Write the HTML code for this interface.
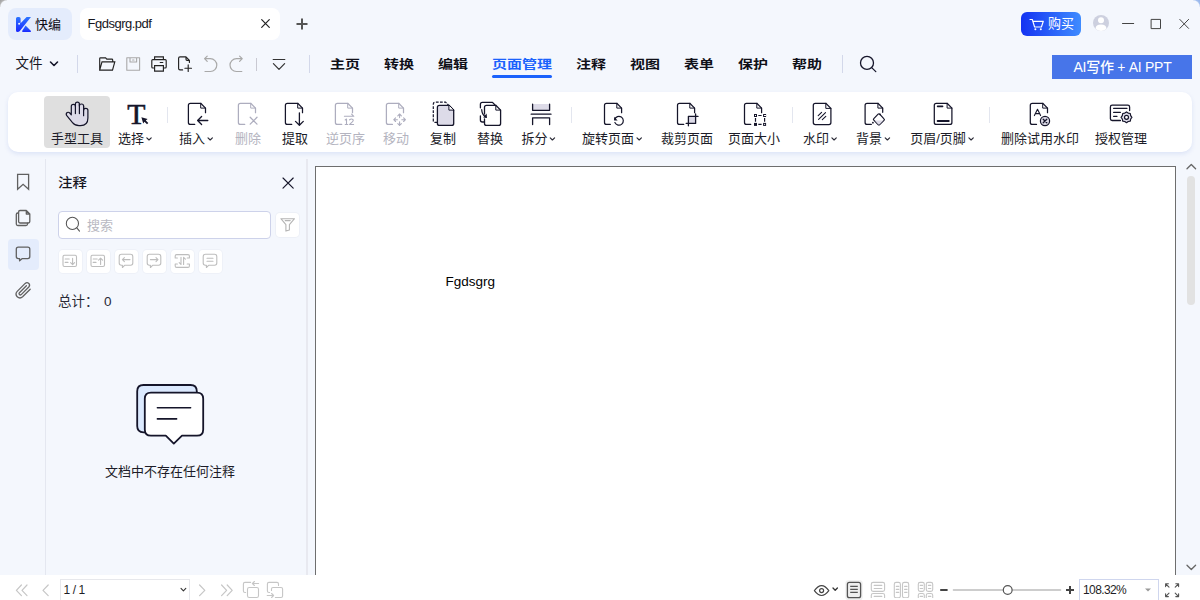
<!DOCTYPE html>
<html lang="zh-CN">
<head>
<meta charset="utf-8">
<title>快编</title>
<style>
*{box-sizing:border-box;margin:0;padding:0}
html,body{width:1200px;height:600px;overflow:hidden}
body{background:#f4f7fd;font-family:"Liberation Sans","Noto Sans CJK SC",sans-serif;color:#1c1c28;position:relative;font-size:13px}
.abs{position:absolute}
svg{position:absolute;overflow:visible}
.t{position:absolute;white-space:nowrap;line-height:1}
/* title bar */
#brand{left:8px;top:8px;width:64px;height:32px;border-radius:8px;background:#e4ecfc}
#tab{left:80px;top:8px;width:200px;height:32px;border-radius:8px;background:#fff}
#buy{left:1021px;top:12px;width:60px;height:24px;border-radius:6px;background:linear-gradient(90deg,#1433f2,#3f8cff)}
/* menu */
.m{position:absolute;top:56.8px;font-size:15px;font-weight:bold;line-height:16px;white-space:nowrap;color:#101018;transform:scaleY(.82);transform-origin:50% 50%}
.vs{position:absolute;width:1px;background:#d3d8ea}
.ts{position:absolute;width:1px;top:107px;height:16px;background:#e3e6ef}
#ai{left:1052px;top:55px;width:140px;height:24px;background:#4775e9;color:#fff;font-size:14px;font-weight:500;letter-spacing:-.28px;text-align:center;line-height:25px;padding-left:1px}
/* toolbar */
#tb{left:8px;top:92px;width:1184px;height:60px;border-radius:10px;background:#fff;box-shadow:0 2px 4px rgba(190,205,240,.45)}
#hand{left:44px;top:96px;width:66px;height:52px;border-radius:4px;background:#dfdfdf}
.l{position:absolute;top:131.5px;font-size:13px;line-height:14px;white-space:nowrap;color:#1c1c28;transform:translateX(-50%)}
.l.d{color:#b4b4c0}
.l i{font-style:normal;display:inline-block;width:8px}
/* side */
#side-act{left:8px;top:238.5px;width:30.5px;height:31px;border-radius:4px;background:#e4ecfc}
#search{left:58px;top:211px;width:213px;height:28px;border:1px solid #cdd2ea;border-radius:4px;background:#fff}
.sb{position:absolute;top:249.5px;width:23px;height:23px;border-radius:4px;background:#fff;box-shadow:0 0 0 1px #eef1f8}
#page{left:315px;top:166px;width:861px;height:420px;background:#fff;border:1px solid #6e6e6e}
#status{left:0;top:575px;width:1200px;height:25px;background:#fff}
</style>
</head>
<body>
<div class="abs" style="left:0;top:0;width:7px;height:7px;background:radial-gradient(circle at 100% 100%,#f4f7fd 6.2px,#b4b4b4 7.4px,#9c9c9c 10px)"></div>
<div class="abs" style="right:0;top:0;width:7px;height:7px;background:radial-gradient(circle at 0 100%,#f4f7fd 6.2px,#a3bfee 7.4px,#8fb0ea 10px)"></div>
<!-- TITLE BAR -->
<div class="abs" id="brand"></div>
<div class="t" style="left:35px;top:18px;font-size:13px;line-height:14px;color:#0d0d15">快编</div>
<div class="abs" id="tab"></div>
<div class="t" style="left:87.5px;top:17px;font-size:13px;letter-spacing:-.5px;line-height:14px;color:#16161e">Fgdsgrg.pdf</div>
<div class="abs" id="buy"></div>
<div class="t" style="left:1048px;top:17px;font-size:13px;line-height:14px;color:#fff">购买</div>

<!-- MENU BAR -->
<div class="t" style="left:15.5px;top:55.5px;font-size:13.5px;line-height:16px;color:#15151f">文件</div>
<div class="vs" style="left:77px;top:55px;height:18px"></div>
<div class="vs" style="left:256px;top:58px;height:13px;background:#c9c9d2"></div>
<div class="vs" style="left:309px;top:55px;height:18px"></div>
<div class="m" style="left:330px">主页</div>
<div class="m" style="left:384px">转换</div>
<div class="m" style="left:438px">编辑</div>
<div class="m" style="left:492px;color:#1b62fc">页面管理</div>
<div class="abs" style="left:492px;top:75px;width:60px;height:3px;border-radius:2px;background:#1b62fc"></div>
<div class="m" style="left:576px">注释</div>
<div class="m" style="left:630px">视图</div>
<div class="m" style="left:684px">表单</div>
<div class="m" style="left:738px">保护</div>
<div class="m" style="left:792px">帮助</div>
<div class="vs" style="left:842px;top:55px;height:18px"></div>
<div class="abs" id="ai">AI写作 + AI PPT</div>

<!-- TOOLBAR -->
<div class="abs" id="tb"></div>
<div class="abs" id="hand"></div>
<div class="l" style="left:77px">手型工具</div>
<div class="l" style="left:135px">选择<i></i></div>
<div class="l" style="left:196px">插入<i></i></div>
<div class="l d" style="left:248px">删除</div>
<div class="l" style="left:295px">提取</div>
<div class="l d" style="left:345.5px">逆页序</div>
<div class="l d" style="left:396px">移动</div>
<div class="l" style="left:443px">复制</div>
<div class="l" style="left:490px">替换</div>
<div class="l" style="left:538.5px">拆分<i></i></div>
<div class="l" style="left:612px">旋转页面<i></i></div>
<div class="l" style="left:687px">裁剪页面</div>
<div class="l" style="left:754px">页面大小</div>
<div class="l" style="left:820px">水印<i></i></div>
<div class="l" style="left:873px">背景<i></i></div>
<div class="l" style="left:942px">页眉/页脚<i></i></div>
<div class="l" style="left:1040px">删除试用水印</div>
<div class="l" style="left:1121px">授权管理</div>
<div class="ts" style="left:167px"></div>
<div class="ts" style="left:571px"></div>
<div class="ts" style="left:792px"></div>
<div class="ts" style="left:989px"></div>

<!-- SIDEBAR -->
<div class="vs" style="left:45px;top:159px;height:417px;background:#e4e7f0"></div>
<div class="abs" id="side-act"></div>
<div class="t" style="left:58px;top:175px;font-size:14.5px;font-weight:500;line-height:15px;color:#15151f;transform:scaleY(.9)">注释</div>
<div class="abs" id="search"></div>
<div class="t" style="left:87px;top:218.7px;font-size:13px;line-height:14px;color:#b9b9c2">搜索</div>
<div class="abs" style="left:275.5px;top:213px;width:23px;height:23.5px;border-radius:4px;background:#fff;box-shadow:0 0 0 1px #edf0f7"></div>
<div class="sb" style="left:58.5px"></div>
<div class="sb" style="left:86.5px"></div>
<div class="sb" style="left:114.5px"></div>
<div class="sb" style="left:142.5px"></div>
<div class="sb" style="left:170.5px"></div>
<div class="sb" style="left:198.5px"></div>
<div class="t" style="left:58px;top:295px;font-size:13.5px;line-height:14px;color:#2a2a36">总计：</div>
<div class="t" style="left:104px;top:295px;font-size:13.5px;line-height:14px;color:#2a2a36">0</div>
<div class="t" style="left:105px;top:465px;font-size:13px;line-height:14px;color:#1c1c28">文档中不存在任何注释</div>
<div class="vs" style="left:306px;top:159px;height:417px;width:2px;background:#e8e9f0"></div>

<!-- DOCUMENT -->
<div class="abs" id="page"></div>
<div class="t" style="left:445.5px;top:275px;font-size:13.5px;line-height:14px;color:#000">Fgdsgrg</div>
<div class="abs" style="left:1187px;top:176px;width:8px;height:129px;border-radius:4px;background:#e2e2e2"></div>

<!-- STATUS BAR -->
<div class="abs" id="status"></div>
<div class="abs" style="left:60px;top:579px;width:130px;height:22px;background:#fff;border:1px solid #e7e8ec"></div>
<div class="t" style="left:63.5px;top:584px;font-size:12px;letter-spacing:-.4px;line-height:13px;color:#1e1e26">1 / 1</div>
<div class="abs" style="left:1079px;top:579px;width:80px;height:22px;background:#fff;border:1px solid #cfd6ee"></div>
<div class="t" style="left:1083px;top:583.5px;font-size:12px;line-height:13px;letter-spacing:-.6px;color:#1e1e26">108.32%</div>
<svg width="1200" height="600" viewBox="0 0 1200 600" style="left:0;top:0;pointer-events:none" id="ic1">
<defs><linearGradient id="kg" x1="0" y1="0" x2="0" y2="1"><stop offset="0" stop-color="#2b74ff"/><stop offset="1" stop-color="#1a27ff"/></linearGradient></defs>
<g transform="translate(16,17)"><path d="M0,1.6 Q0,0 1.6,0 H3 Q4.6,0 4.6,1.6 V6.2 L10.6,0 H15 L3.6,14.2 Q2.8,15 1.6,15 Q0,15 0,13.4 Z" fill="url(#kg)"/><path d="M9.6,8.6 L15,14 Q15.2,15 14.2,15 H6.6 Q5.8,14.6 6.4,13.4 Z" fill="url(#kg)"/><circle cx="3.1" cy="6.8" r="1" fill="#f4f7ff"/></g>
<path d="M261.7,19.7 L269.3,27.3 M269.3,19.7 L261.7,27.3" fill="none" stroke="#222" stroke-width="1.2" stroke-linecap="round" stroke-linejoin="round" />
<path d="M296.5,24 H307.5 M302,18.5 V29.5" fill="none" stroke="#555" stroke-width="2" stroke-linejoin="round" stroke-linecap="butt"/>
<path d="M1030,19.5 H1032.3 L1034.6,27 H1041.4 L1043.3,21.3 H1033" fill="none" stroke="#fff" stroke-width="1.15" stroke-linecap="round" stroke-linejoin="round" />
<circle cx="1035.4" cy="29.3" r="1" fill="#fff"/><circle cx="1040.8" cy="29.3" r="1" fill="#fff"/>
<circle cx="1101" cy="23" r="8" fill="#cdd0df"/><circle cx="1101" cy="20.3" r="3" fill="#fff"/><path d="M1095.5,28.8 Q1095.8,24.6 1101,24.6 Q1106.2,24.6 1106.5,28.8 Q1104,31 1101,31 Q1098,31 1095.5,28.8 Z" fill="#fff"/>
<path d="M1122.5,23.5 H1133.7" fill="none" stroke="#444" stroke-width="1" stroke-linecap="round" stroke-linejoin="round" />
<path d="M1151.5,19.4 H1160.5 V28.6 H1151.5 Z" fill="none" stroke="#444" stroke-width="1" stroke-linecap="round" stroke-linejoin="round" />
<path d="M1179.8,19.4 L1188.6,28.4 M1188.6,19.4 L1179.8,28.4" fill="none" stroke="#444" stroke-width="1" stroke-linecap="round" stroke-linejoin="round" />
<path d="M50.5,62 L54,65.5 L57.5,62" fill="none" stroke="#15152a" stroke-width="1.6" stroke-linecap="round" stroke-linejoin="round" />
<path d="M99.7,70.1 V58.6 Q99.7,57.8 100.5,57.8 H105.6 L106.8,59.1 H111.8 Q112.7,59.1 112.7,60 V61.8 M99.7,70.1 L102,61.9 H114.8 L112.5,70.1 Z" fill="none" stroke="#222" stroke-width="1.15" stroke-linecap="round" stroke-linejoin="miter"/>
<path d="M126.8,57.7 H139.6 V70.2 H126.8 Z M130,57.7 V62 H136.6 V57.7 M132.6,60 H134" fill="none" stroke="#a9a9a9" stroke-width="1.1" stroke-linecap="round" stroke-linejoin="round" />
<path d="M154.6,59.6 V56.8 H163.4 V59.6 M154.6,68 H152.8 Q151.8,68 151.8,67 V60.6 Q151.8,59.6 152.8,59.6 H165.2 Q166.2,59.6 166.2,60.6 V67 Q166.2,68 165.2,68 H163.4 M154.6,65.6 H163.4 V71.1 H154.6 Z M160.2,62.5 H162.8" fill="none" stroke="#222" stroke-width="1.15" stroke-linecap="round" stroke-linejoin="miter"/>
<path d="M189.4,62.5 V60.3 L186,56.9 H180 Q178.6,56.9 178.6,58.3 V68.5 Q178.6,69.9 180,69.9 H182.6 M186,56.9 V59.3 Q186,60.3 187,60.3 H189.4 M184.9,68.2 H191.5 M188.2,64.9 V71.5" fill="none" stroke="#222" stroke-width="1.15" stroke-linecap="round" stroke-linejoin="round" />
<path d="M205,71.5 H210.4 A6.4,6.4 0 0 0 210.4,58.7 H204.6 M207.2,56.1 L204.6,58.7 L207.2,61.3" fill="none" stroke="#a9a9a9" stroke-width="1.2" stroke-linecap="round" stroke-linejoin="round" />
<path d="M241.8,71.5 H236.4 A6.4,6.4 0 0 1 236.4,58.7 H242.2 M239.6,56.1 L242.2,58.7 L239.6,61.3" fill="none" stroke="#a9a9a9" stroke-width="1.2" stroke-linecap="round" stroke-linejoin="round" />
<path d="M273.2,59.5 H284.8 M273.4,63.6 L279,69.4 L284.6,63.6" fill="none" stroke="#333" stroke-width="1.2" stroke-linecap="round" stroke-linejoin="round" />
<circle cx="867" cy="62.9" r="6.5" fill="none" stroke="#15152a" stroke-width="1.3"/>
<path d="M871.7,67.6 L875.8,71.6" fill="none" stroke="#15152a" stroke-width="1.3" stroke-linecap="round" stroke-linejoin="round" />
<path d="M71.3,114.8 V106.3 Q71.3,104.3 73.35,104.3 Q75.4,104.3 75.4,106.3 V104.1 Q75.4,102.1 77.4,102.1 Q79.4,102.1 79.4,104.1 V106 Q79.4,104 81.5,104 Q83.6,104 83.6,106 V110.3 Q83.6,108.3 85.75,108.3 Q87.9,108.3 87.9,110.3 V118 Q87.9,125.6 80.5,125.6 H79 Q75,125.6 72.5,122.6 L66.6,115.4 Q65.6,113.6 67.2,112.5 Q68.6,111.8 69.8,113 Z" fill="#dddbe8" stroke="#15152a" stroke-width="1.2" stroke-linecap="round" stroke-linejoin="round" />
<path d="M75.4,106.3 V113.6 M79.4,104.1 V113.6 M83.6,106 V115.7" fill="none" stroke="#15152a" stroke-width="1.2" stroke-linecap="round" stroke-linejoin="round" />
<text x="136.45" y="123.8" font-family="Liberation Serif, serif" font-size="29.8" text-anchor="middle" fill="#15152a" stroke="#15152a" stroke-width="0.55">T</text>
<path d="M141.4,117.2 L147.6,119 L145.8,120.4 L148.3,122.9 L147,124.2 L144.5,121.7 L143.2,123.4 Z" fill="#15152a" stroke="#fff" stroke-width="1.2" paint-order="stroke"/>
<path d="M205.5,112.7 V108.1 L200.7,103.3 H190.4 Q188.4,103.3 188.4,105.3 V122.4 Q188.4,124.4 190.4,124.4 H194.70000000000002" fill="none" stroke="#15152a" stroke-width="1.25" stroke-linecap="round" stroke-linejoin="round" />
<path d="M200.7,103.3 V108.1 H205.5" fill="none" stroke="#15152a" stroke-width="1.0" stroke-linecap="round" stroke-linejoin="round" />
<path d="M197.6,120.5 H207.8 M201.6,116.5 L197.6,120.5 L201.6,124.5" fill="none" stroke="#15152a" stroke-width="1.3" stroke-linecap="round" stroke-linejoin="round" />
<path d="M255.5,112.7 V108.1 L250.7,103.3 H240.4 Q238.4,103.3 238.4,105.3 V122.4 Q238.4,124.4 240.4,124.4 H244.70000000000002" fill="none" stroke="#adadbe" stroke-width="1.25" stroke-linecap="round" stroke-linejoin="round" />
<path d="M250.7,103.3 V108.1 H255.5" fill="none" stroke="#adadbe" stroke-width="1.0" stroke-linecap="round" stroke-linejoin="round" />
<path d="M250.2,117.3 L257,124.1 M257,117.3 L250.2,124.1" fill="none" stroke="#adadbe" stroke-width="1.3" stroke-linecap="round" stroke-linejoin="round" />
<path d="M302.5,112.7 V108.1 L297.7,103.3 H287.4 Q285.4,103.3 285.4,105.3 V122.4 Q285.4,124.4 287.4,124.4 H291.7" fill="none" stroke="#15152a" stroke-width="1.25" stroke-linecap="round" stroke-linejoin="round" />
<path d="M297.7,103.3 V108.1 H302.5" fill="none" stroke="#15152a" stroke-width="1.0" stroke-linecap="round" stroke-linejoin="round" />
<path d="M299.4,112.8 V125.2 M295.5,121.4 L299.4,125.2 L303.3,121.4" fill="none" stroke="#15152a" stroke-width="1.3" stroke-linecap="round" stroke-linejoin="round" />
<path d="M352.5,112.7 V108.1 L347.7,103.3 H337.4 Q335.4,103.3 335.4,105.3 V122.4 Q335.4,124.4 337.4,124.4 H341.7" fill="none" stroke="#adadbe" stroke-width="1.25" stroke-linecap="round" stroke-linejoin="round" />
<path d="M347.7,103.3 V108.1 H352.5" fill="none" stroke="#adadbe" stroke-width="1.0" stroke-linecap="round" stroke-linejoin="round" />
<path d="M344.4,116.3 H353.8 L351.6,114.1" fill="none" stroke="#adadbe" stroke-width="1.1" stroke-linecap="round" stroke-linejoin="round" />
<path d="M345.2,120 L346.5,119 V124.5 M345.2,124.5 H347.8 M349.6,119.8 Q351.5,118.3 353.2,119.8 Q353.8,121 349.6,124.5 H353.6" fill="none" stroke="#adadbe" stroke-width="1.1" stroke-linecap="round" stroke-linejoin="round" />
<path d="M403.5,112.7 V108.1 L398.7,103.3 H388.4 Q386.4,103.3 386.4,105.3 V122.4 Q386.4,124.4 388.4,124.4 H392.4" fill="none" stroke="#adadbe" stroke-width="1.25" stroke-linecap="round" stroke-linejoin="round" />
<path d="M398.7,103.3 V108.1 H403.5" fill="none" stroke="#adadbe" stroke-width="1.0" stroke-linecap="round" stroke-linejoin="round" />
<path d="M399.6,114 V117.6 M399.6,121.8 V125.4 M393.8,119.7 H397.4 M401.8,119.7 H405.4 M397.8,115.8 L399.6,114 L401.4,115.8 M397.8,123.6 L399.6,125.4 L401.4,123.6 M395.6,117.9 L393.8,119.7 L395.6,121.5 M403.6,117.9 L405.4,119.7 L403.6,121.5" fill="none" stroke="#adadbe" stroke-width="1.1" stroke-linecap="round" stroke-linejoin="round" />
<path d="M437.4,122.4 H435.2 Q433.3,122.4 433.3,120.4 V104.1 Q433.3,102.2 435.2,102.2 H445.6 L448.4,105" fill="none" stroke="#15152a" stroke-width="1.2" stroke-linejoin="round" stroke-dasharray="2.8 1.3" stroke-linecap="butt"/>
<path d="M448.9,105.3 H439.4 Q437.4,105.3 437.4,107.3 V123.4 Q437.4,125.4 439.4,125.4 H451.7 Q453.7,125.4 453.7,123.4 V110.1 Z" fill="#dddbe8" stroke="#15152a" stroke-width="1.3" stroke-linecap="round" stroke-linejoin="round" />
<path d="M448.9,105.3 V110.1 H453.7 Z" fill="#fff" stroke="#15152a" stroke-width="1.0" stroke-linecap="round" stroke-linejoin="round" />
<path d="M484.5,122 H482.4 Q480.4,122 480.4,120 V116 M480.4,107.8 V104.3 Q480.4,102.4 482.4,102.4 H492.5 L495,105" fill="none" stroke="#15152a" stroke-width="1.3" stroke-linecap="round" stroke-linejoin="round" />
<path d="M484.5,114.1 V107.3 Q484.5,105.3 486.5,105.3 H495.8 L500.6,110.1 V123.4 Q500.6,125.4 498.6,125.4 H486.5 Q484.5,125.4 484.5,123.4 V119 " fill="none" stroke="#15152a" stroke-width="1.3" stroke-linecap="round" stroke-linejoin="round" />
<path d="M495.8,105.3 V110.1 H500.6" fill="none" stroke="#15152a" stroke-width="1.0" stroke-linecap="round" stroke-linejoin="round" />
<path d="M481.7,109.6 Q482,114.8 485.4,116.6" fill="none" stroke="#15152a" stroke-width="1.2" stroke-linecap="round" stroke-linejoin="round" />
<path d="M486.6,113.6 L487,118 L483.2,117.4 Z" fill="#15152a"/>
<rect x="532.6" y="104" width="17" height="6.3" fill="#dddbe8"/>
<path d="M532.6,104.2 V110.3 H549.6 V104.2 M531.2,114.2 H551 M532.6,124.5 V117.8 H549.6 V124.5" fill="none" stroke="#15152a" stroke-width="1.3" stroke-linecap="round" stroke-linejoin="round" />
<path d="M621.6,112.7 V108.1 L616.8000000000001,103.3 H606.5 Q604.5,103.3 604.5,105.3 V122.4 Q604.5,124.4 606.5,124.4 H610.3" fill="none" stroke="#15152a" stroke-width="1.25" stroke-linecap="round" stroke-linejoin="round" />
<path d="M616.8000000000001,103.3 V108.1 H621.6" fill="none" stroke="#15152a" stroke-width="1.0" stroke-linecap="round" stroke-linejoin="round" />
<path d="M614.7,119.5 A4.4,4.4 0 1 1 614.9,122.6" fill="none" stroke="#15152a" stroke-width="1.2" stroke-linecap="round" stroke-linejoin="round" />
<path d="M614.1,116.8 V120.4 H617.6 Z" fill="#15152a"/>
<path d="M694.6,112.7 V108.1 L689.8000000000001,103.3 H679.5 Q677.5,103.3 677.5,105.3 V122.4 Q677.5,124.4 679.5,124.4 H683.7" fill="none" stroke="#15152a" stroke-width="1.25" stroke-linecap="round" stroke-linejoin="round" />
<path d="M689.8000000000001,103.3 V108.1 H694.6" fill="none" stroke="#15152a" stroke-width="1.0" stroke-linecap="round" stroke-linejoin="round" />
<rect x="688.4" y="116.4" width="7.2" height="7" fill="#dddbe8"/>
<path d="M688.4,116.4 V125.8 M686.2,123.4 H695.6 V114 M688.4,116.4 H698" fill="none" stroke="#15152a" stroke-width="1.3" stroke-linecap="round" stroke-linejoin="round" />
<path d="M761.6,112.7 V108.1 L756.8000000000001,103.3 H746.5 Q744.5,103.3 744.5,105.3 V122.4 Q744.5,124.4 746.5,124.4 H750.7" fill="none" stroke="#15152a" stroke-width="1.25" stroke-linecap="round" stroke-linejoin="round" />
<path d="M756.8000000000001,103.3 V108.1 H761.6" fill="none" stroke="#15152a" stroke-width="1.0" stroke-linecap="round" stroke-linejoin="round" />
<path d="M758.3,115.5 H761.6 M758.3,124.4 H761.6 M755.5,118.1 V121.7 M764.6,118.1 V121.7" fill="none" stroke="#15152a" stroke-width="1.2" stroke-linejoin="round" stroke-linecap="butt"/>
<rect x="754.5" y="114.5" width="2" height="2" fill="#fff" stroke="#15152a" stroke-width="1"/>
<rect x="754.5" y="123.4" width="2" height="2" fill="#fff" stroke="#15152a" stroke-width="1"/>
<rect x="763.6" y="114.5" width="2" height="2" fill="#fff" stroke="#15152a" stroke-width="1"/>
<rect x="763.6" y="123.4" width="2" height="2" fill="#fff" stroke="#15152a" stroke-width="1"/>
<path d="M825.8,103.3 H815.3 Q813.3,103.3 813.3,105.3 V122.5 Q813.3,124.5 815.3,124.5 H828.9 Q830.9,124.5 830.9,122.5 V108.39999999999999 Z" fill="none" stroke="#15152a" stroke-width="1.25" stroke-linecap="round" stroke-linejoin="round" />
<path d="M825.8,103.3 V108.39999999999999 H830.9" fill="none" stroke="#15152a" stroke-width="1.0" stroke-linecap="round" stroke-linejoin="round" />
<path d="M818.2,115.6 L821.6,112.3 M818.6,119.4 L825.5,112.7 M822.3,119.7 L825.8,116.4" fill="none" stroke="#15152a" stroke-width="1.1" stroke-linecap="round" stroke-linejoin="round" />
<path d="M882.7,112.3 V108.1 L877.9000000000001,103.3 H867.1 Q865.1,103.3 865.1,105.3 V122.4 Q865.1,124.4 867.1,124.4 H871.3000000000001" fill="none" stroke="#15152a" stroke-width="1.25" stroke-linecap="round" stroke-linejoin="round" />
<path d="M877.9000000000001,103.3 V108.1 H882.7" fill="none" stroke="#15152a" stroke-width="1.0" stroke-linecap="round" stroke-linejoin="round" />
<path d="M878.1,114.2 Q878.9,113.4 879.7,114.2 L884,118.8 Q884.8,119.6 884,120.4 L879.7,124.5 Q878.9,125.3 878.1,124.5 L873.8,120.2 Q873,119.4 873.8,118.6 Z" fill="#fff" stroke="#15152a" stroke-width="1.2" stroke-linecap="round" stroke-linejoin="round" />
<path d="M874.8,120.6 H883.2 L879.7,124.2 Q878.9,125 878.1,124.2 Z" fill="#dddbe8" stroke="none" stroke-width="0" stroke-linecap="round" stroke-linejoin="round" />
<circle cx="872.9" cy="122.7" r="0.9" fill="#15152a"/><circle cx="880" cy="114.3" r="0.9" fill="#15152a"/>
<path d="M947.1,103.3 H936.3 Q934.3,103.3 934.3,105.3 V122.4 Q934.3,124.4 936.3,124.4 H949.9 Q951.9,124.4 951.9,122.4 V108.1 Z" fill="none" stroke="#15152a" stroke-width="1.25" stroke-linecap="round" stroke-linejoin="round" />
<path d="M947.1,103.3 V108.1 H951.9" fill="none" stroke="#15152a" stroke-width="1.0" stroke-linecap="round" stroke-linejoin="round" />
<path d="M937.6,106.4 H942.6" fill="none" stroke="#15152a" stroke-width="1.6" stroke-linecap="round" stroke-linejoin="round" />
<path d="M937.6,121 H948.8" fill="none" stroke="#15152a" stroke-width="1.8" stroke-linecap="round" stroke-linejoin="round" />
<path d="M1047.5,112.7 V108.1 L1042.7,103.3 H1032.3 Q1030.3,103.3 1030.3,105.3 V122.4 Q1030.3,124.4 1032.3,124.4 H1036.5" fill="none" stroke="#15152a" stroke-width="1.25" stroke-linecap="round" stroke-linejoin="round" />
<path d="M1042.7,103.3 V108.1 H1047.5" fill="none" stroke="#15152a" stroke-width="1.0" stroke-linecap="round" stroke-linejoin="round" />
<path d="M1034.4,115.6 L1037.5,109.2 L1040.6,115.6 M1035.4,113.6 H1039.6" fill="none" stroke="#15152a" stroke-width="1.1" stroke-linecap="round" stroke-linejoin="round" />
<circle cx="1045" cy="121" r="4.6" fill="#dddbe8" stroke="#15152a" stroke-width="1.2"/>
<path d="M1043.2,119.2 L1046.8,122.8 M1046.8,119.2 L1043.2,122.8" fill="none" stroke="#15152a" stroke-width="1.3" stroke-linecap="round" stroke-linejoin="round" />
<path d="M1129.6,110.5 V107 Q1129.6,105.2 1127.8,105.2 H1112.2 Q1110.4,105.2 1110.4,107 V118.7 Q1110.4,120.5 1112.2,120.5 H1120.4 M1113.6,108.3 H1127 M1113.6,112.3 H1120.4 M1113.6,116.3 H1117" fill="none" stroke="#15152a" stroke-width="1.3" stroke-linecap="round" stroke-linejoin="round" />
<path d="M1126.5,111.9 L1128.2,113.1 L1130.3,113.5 L1130.7,115.6 L1131.9,117.3 L1130.7,119.0 L1130.3,121.1 L1128.2,121.5 L1126.5,122.7 L1124.8,121.5 L1122.7,121.1 L1122.3,119.0 L1121.1,117.3 L1122.3,115.6 L1122.7,113.5 L1124.8,113.1 Z" fill="#dddbe8" stroke="#15152a" stroke-width="1.2" stroke-linecap="round" stroke-linejoin="round" />
<circle cx="1126.5" cy="117.3" r="2" fill="#fff" stroke="#15152a" stroke-width="1.2"/>
<path d="M146.8,137.8 L149.0,140.0 L151.20000000000002,137.8" fill="none" stroke="#2a2a36" stroke-width="1.15" stroke-linecap="round" stroke-linejoin="round" />
<path d="M208,137.8 L210.2,140.0 L212.4,137.8" fill="none" stroke="#2a2a36" stroke-width="1.15" stroke-linecap="round" stroke-linejoin="round" />
<path d="M550.2,137.8 L552.4000000000001,140.0 L554.6,137.8" fill="none" stroke="#2a2a36" stroke-width="1.15" stroke-linecap="round" stroke-linejoin="round" />
<path d="M637,137.8 L639.2,140.0 L641.4,137.8" fill="none" stroke="#2a2a36" stroke-width="1.15" stroke-linecap="round" stroke-linejoin="round" />
<path d="M831.9,137.8 L834.1,140.0 L836.3,137.8" fill="none" stroke="#2a2a36" stroke-width="1.15" stroke-linecap="round" stroke-linejoin="round" />
<path d="M885.2,137.8 L887.4000000000001,140.0 L889.6,137.8" fill="none" stroke="#2a2a36" stroke-width="1.15" stroke-linecap="round" stroke-linejoin="round" />
<path d="M968.9,137.8 L971.1,140.0 L973.3,137.8" fill="none" stroke="#2a2a36" stroke-width="1.15" stroke-linecap="round" stroke-linejoin="round" />
</svg>
<svg width="1200" height="600" viewBox="0 0 1200 600" style="left:0;top:0;pointer-events:none" id="ic2">
<path d="M17.6,174.4 H28.6 V189.3 L23.1,184.3 L17.6,189.3 Z" fill="none" stroke="#606060" stroke-width="1.3" stroke-linecap="round" stroke-linejoin="miter"/>
<path d="M18.5,213 H17.8 Q16.3,213 16.3,214.5 V224 Q16.3,225.5 17.8,225.5 H26 Q27.5,225.5 27.5,224 V223.2" fill="none" stroke="#606060" stroke-width="1.3" stroke-linecap="round" stroke-linejoin="round" />
<path d="M26.3,210.5 H20 Q18.6,210.5 18.6,212 V221.6 Q18.6,223 20,223 H28.4 Q29.8,223 29.8,221.6 V214 Z M26.3,210.5 V214 H29.8" fill="none" stroke="#606060" stroke-width="1.3" stroke-linecap="round" stroke-linejoin="round" />
<path d="M18.3,247.2 H27.8 Q29.8,247.2 29.8,249.2 V256.6 Q29.8,258.6 27.8,258.6 H22.3 L19.6,260.8 V258.6 H18.3 Q16.3,258.6 16.3,256.6 V249.2 Q16.3,247.2 18.3,247.2 Z" fill="none" stroke="#606060" stroke-width="1.3" stroke-linecap="round" stroke-linejoin="round" />
<path d="M30.2,289.2 L22.6,296.8 Q20,299.2 17.2,296.8 Q14.8,294 17.2,291.4 L25.2,283.4 Q27,281.8 28.8,283.4 Q30.4,285.2 28.8,287 L21.2,294.6 Q20.2,295.4 19.4,294.6 Q18.6,293.6 19.4,292.8 L26.4,285.8" fill="none" stroke="#606060" stroke-width="1.3" stroke-linecap="round" stroke-linejoin="round" />
<path d="M283,178 L293.2,188.2 M293.2,178 L283,188.2" fill="none" stroke="#15152a" stroke-width="1.15" stroke-linecap="round" stroke-linejoin="round" />
<circle cx="72.4" cy="223.4" r="6.1" fill="none" stroke="#555" stroke-width="1.05"/>
<path d="M76.8,227.9 L79.5,231.2" fill="none" stroke="#555" stroke-width="1.05" stroke-linecap="round" stroke-linejoin="round" />
<path d="M280.9,218.7 H294.5 L289.4,224.7 V229.9 L285.9,231.1 V224.7 Z M285.2,220.6 H290.2" fill="none" stroke="#b4b4b4" stroke-width="1.1" stroke-linecap="round" stroke-linejoin="round" />
<path d="M64.5,255.3 H75.0 Q76.5,255.3 76.5,256.8 V265.0 Q76.5,266.5 75.0,266.5 H64.5 Q63,266.5 63,265.0 V256.8 Q63,255.3 64.5,255.3 Z" fill="none" stroke="#bdbdbd" stroke-width="1.1" stroke-linecap="round" stroke-linejoin="round" />
<path d="M65.2,259 H69.2 M65.2,262.4 H68 M72.6,258.4 V264.4 M70.6,262.6 L72.6,264.6 L74.6,262.6" fill="none" stroke="#bdbdbd" stroke-width="1.1" stroke-linecap="round" stroke-linejoin="round" />
<path d="M92.5,255.3 H103.0 Q104.5,255.3 104.5,256.8 V265.0 Q104.5,266.5 103.0,266.5 H92.5 Q91,266.5 91,265.0 V256.8 Q91,255.3 92.5,255.3 Z" fill="none" stroke="#bdbdbd" stroke-width="1.1" stroke-linecap="round" stroke-linejoin="round" />
<path d="M93.2,259 H97.2 M93.2,262.4 H96 M100.6,258.4 V264.4 M98.6,260.2 L100.6,258.2 L102.6,260.2" fill="none" stroke="#bdbdbd" stroke-width="1.1" stroke-linecap="round" stroke-linejoin="round" />
<path d="M121.4,254.3 H130.60000000000002 Q132.8,254.3 132.8,256.5 V263.1 Q132.8,265.3 130.60000000000002,265.3 H124.60000000000001 L122.4,267.5 V265.3 H121.4 Q119.2,265.3 119.2,263.1 V256.5 Q119.2,254.3 121.4,254.3 Z" fill="none" stroke="#bdbdbd" stroke-width="1.1" stroke-linecap="round" stroke-linejoin="round" />
<path d="M122.4,259.6 H130 M124.4,257.6 L122.4,259.6 L124.4,261.6" fill="none" stroke="#bdbdbd" stroke-width="1.1" stroke-linecap="round" stroke-linejoin="round" />
<path d="M149.39999999999998,254.3 H158.6 Q160.79999999999998,254.3 160.79999999999998,256.5 V263.1 Q160.79999999999998,265.3 158.6,265.3 H152.6 L150.39999999999998,267.5 V265.3 H149.39999999999998 Q147.2,265.3 147.2,263.1 V256.5 Q147.2,254.3 149.39999999999998,254.3 Z" fill="none" stroke="#bdbdbd" stroke-width="1.1" stroke-linecap="round" stroke-linejoin="round" />
<path d="M150.4,259.6 H158 M156,257.6 L158,259.6 L156,261.6" fill="none" stroke="#bdbdbd" stroke-width="1.1" stroke-linecap="round" stroke-linejoin="round" />
<path d="M175.2,258 V256 Q175.2,254.6 176.6,254.6 H188 Q189.4,254.6 189.4,256 V258 M175.2,264 V266 Q175.2,267.4 176.6,267.4 H188 Q189.4,267.4 189.4,266 V264 M175.2,258 H177.4 M175.2,264 H177.4 M187.2,258 H189.4 M187.2,264 H189.4 M181,257.4 V264.4 M183.6,257.4 V264.4 M179.2,262.6 L181,264.4 M185.4,259.2 L183.6,257.4" fill="none" stroke="#bdbdbd" stroke-width="1.1" stroke-linecap="round" stroke-linejoin="round" />
<path d="M205.39999999999998,254.3 H214.6 Q216.79999999999998,254.3 216.79999999999998,256.5 V263.1 Q216.79999999999998,265.3 214.6,265.3 H208.6 L206.39999999999998,267.5 V265.3 H205.39999999999998 Q203.2,265.3 203.2,263.1 V256.5 Q203.2,254.3 205.39999999999998,254.3 Z" fill="none" stroke="#bdbdbd" stroke-width="1.1" stroke-linecap="round" stroke-linejoin="round" />
<path d="M207,258.2 H213 M207,261.2 H213" fill="none" stroke="#bdbdbd" stroke-width="1.1" stroke-linecap="round" stroke-linejoin="round" />
<path d="M143.5,385 H190.5 Q196.8,385 196.8,391.3 V426 Q196.8,432.3 190.5,432.3 H143.5 Q137.2,432.3 137.2,426 V391.3 Q137.2,385 143.5,385 Z" fill="#dbe9fe" stroke="#15152a" stroke-width="1.8" stroke-linecap="round" stroke-linejoin="round" />
<path d="M151,392.6 H197 Q203.2,392.6 203.2,398.8 V429.5 Q203.2,435.7 197,435.7 H182 L173.8,443.6 L165.8,435.7 H151 Q144.8,435.7 144.8,429.5 V398.8 Q144.8,392.6 151,392.6 Z" fill="#fff" stroke="#15152a" stroke-width="1.8" stroke-linecap="round" stroke-linejoin="round" />
<path d="M157.4,407.8 H190.6 M157.4,418.9 H176.6" fill="none" stroke="#15152a" stroke-width="1.6" stroke-linecap="round" stroke-linejoin="round" />
<path d="M1187,168.8 L1191.3,164.5 L1195.6,168.8" fill="none" stroke="#666" stroke-width="1.3" stroke-linecap="round" stroke-linejoin="round" />
<path d="M1187,565.2 L1191.3,569.5 L1195.6,565.2" fill="none" stroke="#666" stroke-width="1.3" stroke-linecap="round" stroke-linejoin="round" />
</svg>
<svg width="1200" height="600" viewBox="0 0 1200 600" style="left:0;top:0;pointer-events:none" id="ic3">
<path d="M21.4,585 L16.4,590.3 L21.4,595.6 M27,585 L22,590.3 L27,595.6" fill="none" stroke="#c6c6c6" stroke-width="1.2" stroke-linecap="round" stroke-linejoin="round" />
<path d="M48.2,585 L43,590.3 L48.2,595.6" fill="none" stroke="#c6c6c6" stroke-width="1.2" stroke-linecap="round" stroke-linejoin="round" />
<path d="M181,588.4 L183.4,590.8 L185.8,588.4" fill="none" stroke="#333" stroke-width="1.1" stroke-linecap="round" stroke-linejoin="round" />
<path d="M199.6,585 L204.8,590.3 L199.6,595.6" fill="none" stroke="#c6c6c6" stroke-width="1.2" stroke-linecap="round" stroke-linejoin="round" />
<path d="M221.6,585 L226.6,590.3 L221.6,595.6 M227.2,585 L232.2,590.3 L227.2,595.6" fill="none" stroke="#c6c6c6" stroke-width="1.2" stroke-linecap="round" stroke-linejoin="round" />
<path d="M250.6,582.4 H245 Q243.4,582.4 243.4,584 V591 Q243.4,592.5 245,592.5 H245.6" fill="none" stroke="#c6c6c6" stroke-width="1.1" stroke-linecap="round" stroke-linejoin="round" />
<path d="M249.3,587.5 H256.7 Q258.5,587.5 258.5,589.3 V595.7 Q258.5,597.5 256.7,597.5 H249.3 Q247.5,597.5 247.5,595.7 V589.3 Q247.5,587.5 249.3,587.5 Z" fill="none" stroke="#c6c6c6" stroke-width="1.1" stroke-linecap="round" stroke-linejoin="round" />
<path d="M258.6,583.5 H252.4 M254.4,581.5 L252.4,583.5 L254.4,585.5" fill="none" stroke="#c6c6c6" stroke-width="1.1" stroke-linecap="round" stroke-linejoin="round" />
<path d="M278.5,585.4 V584 Q278.5,582.4 277,582.4 H269 Q267.4,582.4 267.4,584 V591 Q267.4,592.5 269,592.5 H269.6" fill="none" stroke="#c6c6c6" stroke-width="1.1" stroke-linecap="round" stroke-linejoin="round" />
<path d="M271.5,590.4 V589 Q271.5,587.5 273,587.5 H281 Q282.6,587.5 282.6,589 V596 Q282.6,597.5 281,597.5 H275.4" fill="none" stroke="#c6c6c6" stroke-width="1.1" stroke-linecap="round" stroke-linejoin="round" />
<path d="M267.2,595.5 H273.6 M271.6,593.5 L273.6,595.5 L271.6,597.5" fill="none" stroke="#c6c6c6" stroke-width="1.1" stroke-linecap="round" stroke-linejoin="round" />
<path d="M814.4,590.6 Q821.6,580.6 828.8,590.6 Q821.6,600.4 814.4,590.6 Z" fill="none" stroke="#444" stroke-width="1.2" stroke-linecap="round" stroke-linejoin="round" />
<circle cx="821.6" cy="590.6" r="2" fill="none" stroke="#444" stroke-width="1.2"/>
<path d="M833,588 L835.2,590.2 L837.4,588" fill="none" stroke="#333" stroke-width="1.3" stroke-linecap="round" stroke-linejoin="round" />
<rect x="845.4" y="580.2" width="17.3" height="20" rx="3" fill="#efefef"/>
<path d="M849.4,582.4 H858.6 Q860.6,582.4 860.6,584.4 V595.6999999999999 Q860.6,597.6999999999999 858.6,597.6999999999999 H849.4 Q847.4,597.6999999999999 847.4,595.6999999999999 V584.4 Q847.4,582.4 849.4,582.4 Z" fill="none" stroke="#555" stroke-width="1.3" stroke-linecap="round" stroke-linejoin="round" />
<path d="M850.2,586.4 H857.8 M850.2,589.4 H857.8 M850.2,592.4 H857.8" fill="none" stroke="#555" stroke-width="1.2" stroke-linejoin="round" stroke-linecap="butt"/>
<clipPath id="cb"><rect x="860" y="575" width="100" height="22.9"/></clipPath><g clip-path="url(#cb)">
<path d="M873.0999999999999,582.4 H882.8 Q884.5999999999999,582.4 884.5999999999999,584.1999999999999 V589.6 Q884.5999999999999,591.4 882.8,591.4 H873.0999999999999 Q871.3,591.4 871.3,589.6 V584.1999999999999 Q871.3,582.4 873.0999999999999,582.4 Z" fill="none" stroke="#c6c6c6" stroke-width="1.1" stroke-linecap="round" stroke-linejoin="round" />
<path d="M874.2,585.4 H881.8 M874.2,588.5 H881.8" fill="none" stroke="#c6c6c6" stroke-width="1.1" stroke-linecap="round" stroke-linejoin="round" />
<path d="M873.0999999999999,593.5 H882.8 Q884.5999999999999,593.5 884.5999999999999,595.3 V600.7 Q884.5999999999999,602.5 882.8,602.5 H873.0999999999999 Q871.3,602.5 871.3,600.7 V595.3 Q871.3,593.5 873.0999999999999,593.5 Z" fill="none" stroke="#c6c6c6" stroke-width="1.1" stroke-linecap="round" stroke-linejoin="round" />
<path d="M874.2,596.4 H881.8" fill="none" stroke="#c6c6c6" stroke-width="1.1" stroke-linecap="round" stroke-linejoin="round" />
<path d="M896.0999999999999,582.4 H898.6 Q900.4,582.4 900.4,584.1999999999999 V595.9 Q900.4,597.6999999999999 898.6,597.6999999999999 H896.0999999999999 Q894.3,597.6999999999999 894.3,595.9 V584.1999999999999 Q894.3,582.4 896.0999999999999,582.4 Z" fill="none" stroke="#c6c6c6" stroke-width="1.1" stroke-linecap="round" stroke-linejoin="round" />
<path d="M904.3,582.4 H906.9000000000001 Q908.7,582.4 908.7,584.1999999999999 V595.9 Q908.7,597.6999999999999 906.9000000000001,597.6999999999999 H904.3 Q902.5,597.6999999999999 902.5,595.9 V584.1999999999999 Q902.5,582.4 904.3,582.4 Z" fill="none" stroke="#c6c6c6" stroke-width="1.1" stroke-linecap="round" stroke-linejoin="round" />
<path d="M896.3,586.4 H898.8 M896.3,589.4 H898.8 M896.3,592.4 H898.8 M904.6,586.4 H907 M904.6,589.4 H907 M904.6,592.4 H907" fill="none" stroke="#c6c6c6" stroke-width="1.1" stroke-linecap="round" stroke-linejoin="round" />
<path d="M920.0999999999999,582.4 H922.5 Q924.3,582.4 924.3,584.1999999999999 V589.6 Q924.3,591.4 922.5,591.4 H920.0999999999999 Q918.3,591.4 918.3,589.6 V584.1999999999999 Q918.3,582.4 920.0999999999999,582.4 Z" fill="none" stroke="#c6c6c6" stroke-width="1.1" stroke-linecap="round" stroke-linejoin="round" />
<path d="M928.0999999999999,582.4 H930.9 Q932.6999999999999,582.4 932.6999999999999,584.1999999999999 V589.6 Q932.6999999999999,591.4 930.9,591.4 H928.0999999999999 Q926.3,591.4 926.3,589.6 V584.1999999999999 Q926.3,582.4 928.0999999999999,582.4 Z" fill="none" stroke="#c6c6c6" stroke-width="1.1" stroke-linecap="round" stroke-linejoin="round" />
<path d="M920.2,585.4 H922.6 M920.2,588.5 H922.6 M928.4,585.4 H930.8 M928.4,588.5 H930.8" fill="none" stroke="#c6c6c6" stroke-width="1.1" stroke-linecap="round" stroke-linejoin="round" />
<path d="M920.0999999999999,593.5 H922.5 Q924.3,593.5 924.3,595.3 V600.7 Q924.3,602.5 922.5,602.5 H920.0999999999999 Q918.3,602.5 918.3,600.7 V595.3 Q918.3,593.5 920.0999999999999,593.5 Z" fill="none" stroke="#c6c6c6" stroke-width="1.1" stroke-linecap="round" stroke-linejoin="round" />
<path d="M928.0999999999999,593.5 H930.9 Q932.6999999999999,593.5 932.6999999999999,595.3 V600.7 Q932.6999999999999,602.5 930.9,602.5 H928.0999999999999 Q926.3,602.5 926.3,600.7 V595.3 Q926.3,593.5 928.0999999999999,593.5 Z" fill="none" stroke="#c6c6c6" stroke-width="1.1" stroke-linecap="round" stroke-linejoin="round" />
<path d="M920.2,596.4 H922.6 M928.4,596.4 H930.8" fill="none" stroke="#c6c6c6" stroke-width="1.1" stroke-linecap="round" stroke-linejoin="round" />
</g>
<path d="M940.2,590 H947.6" fill="none" stroke="#444" stroke-width="2" stroke-linejoin="round" stroke-linecap="butt"/>
<path d="M953.4,590 H1060.6" fill="none" stroke="#bdbdbd" stroke-width="1.4" stroke-linecap="round" stroke-linejoin="round" />
<circle cx="1007.7" cy="590" r="4.4" fill="#fff" stroke="#555" stroke-width="1.2"/>
<path d="M1066,590 H1074 M1070,586 V594" fill="none" stroke="#444" stroke-width="2" stroke-linejoin="round" stroke-linecap="butt"/>
<path d="M1145,588.4 H1151 L1148,591.4 Z" fill="#9a9a9a"/>
<path d="M1165.6,586.6 V583.8 H1168.4 M1165.8,584 L1169,587.2 M1175.8,583.8 H1178.6 V586.6 M1178.4,584 L1175.2,587.2 M1165.6,593.8 V596.6 H1168.4 M1165.8,596.4 L1169,593.2 M1178.6,593.8 V596.6 H1175.8 M1178.4,596.4 L1175.2,593.2" fill="none" stroke="#555" stroke-width="1.1" stroke-linecap="round" stroke-linejoin="round" />
</svg>

</body>
</html>
